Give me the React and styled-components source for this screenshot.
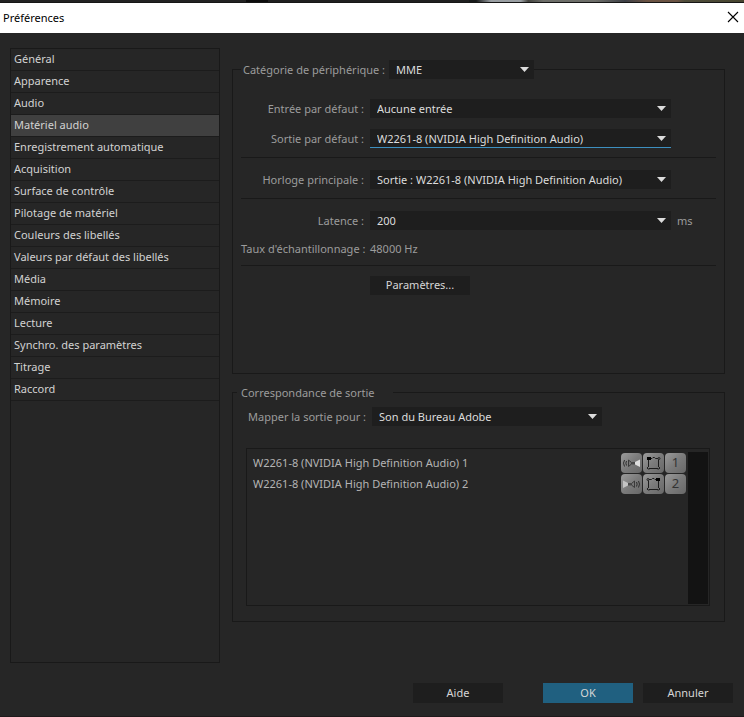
import React, { useState } from "react";
import styled, { createGlobalStyle, css } from "styled-components";

const GlobalStyle = createGlobalStyle`
  *, *::before, *::after {
    box-sizing: border-box;
  }

  body {
    margin: 0;
    background-color: #262626;
    color: #9c9c9c;
    font-family: "Noto Sans", "Liberation Sans", sans-serif;
    font-size: 11px;
    line-height: 15px;
  }

  button, select {
    font: inherit;
  }
`;

const Window = styled.div`
  min-height: 100vh;
  display: flex;
  flex-direction: column;
  background-color: #262626;
  border-bottom: 1px solid #1f191b;
`;

const Backdrop = styled.div`
  height: 3px;
  border-bottom: 1px solid #161616;
  background: linear-gradient(
    to right,
    #222 0 33%,
    #0c0c0c 33% 36%,
    #1f1f1f 36% 63%,
    #17191a 63% 64%,
    #9a9fa3 66% 70%,
    #44443f 71%,
    #6d6e69 73% 80%,
    #3d4046 84%,
    #6b5343 87% 91%,
    #4f4d3b 92%,
    #47452f 100%
  );
`;

const TitleBar = styled.header`
  height: 30px;
  padding: 0 5px 2px 3px;
  display: flex;
  align-items: center;
  justify-content: space-between;
  background-color: #fff;
  color: #000;
`;

const Title = styled.h1`
  margin: 0;
  font-size: 11px;
  font-weight: 400;
`;

const CloseButton = styled.button`
  padding: 0;
  border: 0;
  background: none;
  display: flex;
  color: #000;
`;

const Content = styled.main`
  flex: 1;
  padding: 15px 19px 20px 10px;
  display: flex;
  gap: 12px;
`;

const Categories = styled.ul`
  flex: 0 0 210px;
  margin: 0;
  padding: 0;
  list-style: none;
  border: 1px solid #191919;
`;

const Category = styled.button`
  display: block;
  width: 100%;
  height: 22px;
  padding: 0 3px 2px;
  border: 0;
  border-bottom: 1px solid #1c1c1c;
  background-color: ${(p) => (p.$selected ? "#404040" : "transparent")};
  color: #d2d2d2;
  text-align: left;
`;

const Panels = styled.div`
  flex: 1;
  min-width: 0;
  padding: 12px 0 41px;
  display: flex;
  flex-direction: column;
  gap: 11px;
`;

const Panel = styled.fieldset`
  min-width: 0;
  margin: 0;
  border: 1px solid #191919;
`;

const DevicePanel = styled(Panel)`
  flex: 1;
  padding: 20px 8px 8px;
`;

const MappingPanel = styled(Panel)`
  padding: 7px 14px 15px 13px;
`;

const DeviceLegend = styled.legend`
  display: flex;
  align-items: center;
  gap: 4px;
  padding: 0 0 0 2px;
`;

const MappingLegend = styled.legend`
  margin-left: -9px;
  padding: 0 18px 0 4px;
`;

const Row = styled.div`
  display: grid;
  grid-template-columns: 123px 1fr 39px;
  align-items: center;
  column-gap: 6px;
  margin-bottom: ${(p) => (p.$spaced ? "11px" : "9px")};
`;

const Label = styled.label`
  text-align: right;
  white-space: nowrap;
`;

const Rate = styled.output`
  height: 15px;
`;

const Divider = styled.hr`
  height: 1px;
  margin: 0 0 12px;
  border: 0;
  background-color: #191919;
`;

const SelectBox = styled.div`
  position: relative;
  width: ${(p) => p.$width || "auto"};
  color: #dcdcdc;
`;

const SelectField = styled.select`
  display: block;
  width: 100%;
  height: 19px;
  padding: 0 18px 0 7px;
  border: 0;
  border-radius: 0;
  outline: 0;
  appearance: none;
  background-color: #1e1e1e;
  color: #dcdcdc;
  ${(p) =>
    p.$active &&
    css`
      box-shadow: inset 0 -1px #3d8fbf;
    `}
`;

const Caret = styled.svg`
  position: absolute;
  top: 7px;
  right: 5px;
  pointer-events: none;
`;

const Button = styled.button`
  width: ${(p) => (p.$wide ? "100px" : "90px")};
  height: ${(p) => (p.$wide ? "19px" : "20px")};
  padding: 0 0 2px;
  border: 0;
  background-color: ${(p) => (p.$primary ? "#206080" : "#1e1e1e")};
  color: #d6d6d6;
`;

const SettingsRow = styled.div`
  padding-left: 129px;
  margin-top: -2px;
`;

const MapRow = styled.div`
  display: flex;
  align-items: center;
  gap: 6px;
  padding-left: 2px;
  margin-bottom: 22px;
`;

const OutputBox = styled.div`
  min-height: 158px;
  padding: 3px 1px 1px 6px;
  display: flex;
  gap: 2px;
  border: 1px solid #191919;
`;

const Outputs = styled.ul`
  flex: 1;
  margin: 0;
  padding: 0;
  list-style: none;
`;

const Output = styled.li`
  height: 21px;
  display: flex;
  align-items: center;
  gap: 1px;
  color: #b4b4b4;
`;

const OutputName = styled.span`
  flex: 1;
`;

const Tile = styled.span`
  width: 21px;
  height: 20px;
  display: flex;
  align-items: center;
  justify-content: center;
  border-radius: 4px;
  background: linear-gradient(135deg, #9b9b9b, #7b7b7b 50%, #686868);
  color: #333;
  font-size: 13px;
`;

const Scrollbar = styled.div`
  width: 20px;
  background-color: #131313;
`;

const Footer = styled.footer`
  padding: 0 11px 13px;
  display: flex;
  justify-content: flex-end;
  gap: 10px;
`;

const HelpButton = styled(Button)`
  margin-right: 30px;
`;

const categories = [
  "Général",
  "Apparence",
  "Audio",
  "Matériel audio",
  "Enregistrement automatique",
  "Acquisition",
  "Surface de contrôle",
  "Pilotage de matériel",
  "Couleurs des libellés",
  "Valeurs par défaut des libellés",
  "Média",
  "Mémoire",
  "Lecture",
  "Synchro. des paramètres",
  "Titrage",
  "Raccord",
];

const Select = ({ id, value, width, active }) => (
  <SelectBox $width={width}>
    <SelectField id={id} $active={active}>
      <option>{value}</option>
    </SelectField>
    <Caret width="9" height="5" viewBox="0 0 9 5">
      <path d="M0 0h9L4.5 5z" fill="currentColor" />
    </Caret>
  </SelectBox>
);

const SpeakerIcon = ({ right }) => (
  <svg width="21" height="20" viewBox="0 0 21 20">
    <g transform={right ? "translate(21 0) scale(-1 1)" : undefined} fill="none">
      <path d="M3.5 7Q1.5 10 3.5 13.5M5.5 8Q4.2 10 5.5 12.5" stroke="#2c2c2c" />
      <path d="M7.5 7l3 2.5v1.5l-3 2.5z" fill="#777" stroke="#3a3a3a" />
      <path d="M10.5 9h4v2.5h-4z" fill="#484848" />
      <path d="M14 9l5-2.5v7.5l-5-2.5z" fill={right ? "#c4c4c4" : "#dedede"} />
    </g>
  </svg>
);

const SeatIcon = ({ right }) => (
  <svg width="21" height="20" viewBox="0 0 21 20">
    <g transform={right ? "translate(21 0) scale(-1 1)" : undefined} fill="none">
      <path d="M7 5.5h2l1-1h1.5l1 1H15M15.5 6.5v7.5M5.5 7v7M6 15.5h9" stroke="#1c1c1c" />
      <circle cx="16" cy="5.5" r="1" stroke="#222" />
      <path d="M5.5 13.5l-1.5 1.5 1 1h1.5M15.5 13.5l1.5 1.5-1 1h-1.5" stroke="#222" />
      <path d="M4 4h4v3H4z" fill="#000" />
    </g>
  </svg>
);

const App = () => {
  const [selected, setSelected] = useState("Matériel audio");

  return (
    <>
      <GlobalStyle />
      <Window>
        <Backdrop />
        <TitleBar>
          <Title>Préférences</Title>
          <CloseButton aria-label="Fermer">
            <svg width="12" height="12" viewBox="0 0 12 12">
              <path d="M1 1l10 10M11 1L1 11" stroke="currentColor" strokeWidth="1.1" />
            </svg>
          </CloseButton>
        </TitleBar>
        <Content>
          <Categories>
            {categories.map((name) => (
              <li key={name}>
                <Category $selected={name === selected} onClick={() => setSelected(name)}>
                  {name}
                </Category>
              </li>
            ))}
          </Categories>
          <Panels>
            <DevicePanel>
              <DeviceLegend>
                <label htmlFor="device">Catégorie de périphérique :</label>
                <Select id="device" value="MME" width="145px" />
              </DeviceLegend>
              <Row $spaced>
                <Label htmlFor="input">Entrée par défaut :</Label>
                <Select id="input" value="Aucune entrée" />
              </Row>
              <Row>
                <Label htmlFor="output">Sortie par défaut :</Label>
                <Select id="output" value="W2261-8 (NVIDIA High Definition Audio)" active />
              </Row>
              <Divider />
              <Row>
                <Label htmlFor="clock">Horloge principale :</Label>
                <Select id="clock" value="Sortie : W2261-8 (NVIDIA High Definition Audio)" />
              </Row>
              <Divider />
              <Row $spaced>
                <Label htmlFor="latency">Latence :</Label>
                <Select id="latency" value="200" />
                <span>ms</span>
              </Row>
              <Row>
                <Label htmlFor="rate">Taux d'échantillonnage :</Label>
                <Rate id="rate">48000 Hz</Rate>
              </Row>
              <Divider />
              <SettingsRow>
                <Button $wide>Paramètres...</Button>
              </SettingsRow>
            </DevicePanel>
            <MappingPanel>
              <MappingLegend>Correspondance de sortie</MappingLegend>
              <MapRow>
                <label htmlFor="map">Mapper la sortie pour :</label>
                <Select id="map" value="Son du Bureau Adobe" width="230px" />
              </MapRow>
              <OutputBox>
                <Outputs>
                  {[1, 2].map((n) => (
                    <Output key={n}>
                      <OutputName>W2261-8 (NVIDIA High Definition Audio) {n}</OutputName>
                      <Tile>
                        <SpeakerIcon right={n === 2} />
                      </Tile>
                      <Tile>
                        <SeatIcon right={n === 2} />
                      </Tile>
                      <Tile>{n}</Tile>
                    </Output>
                  ))}
                </Outputs>
                <Scrollbar />
              </OutputBox>
            </MappingPanel>
          </Panels>
        </Content>
        <Footer>
          <HelpButton>Aide</HelpButton>
          <Button $primary>OK</Button>
          <Button>Annuler</Button>
        </Footer>
      </Window>
    </>
  );
};

export default App;
